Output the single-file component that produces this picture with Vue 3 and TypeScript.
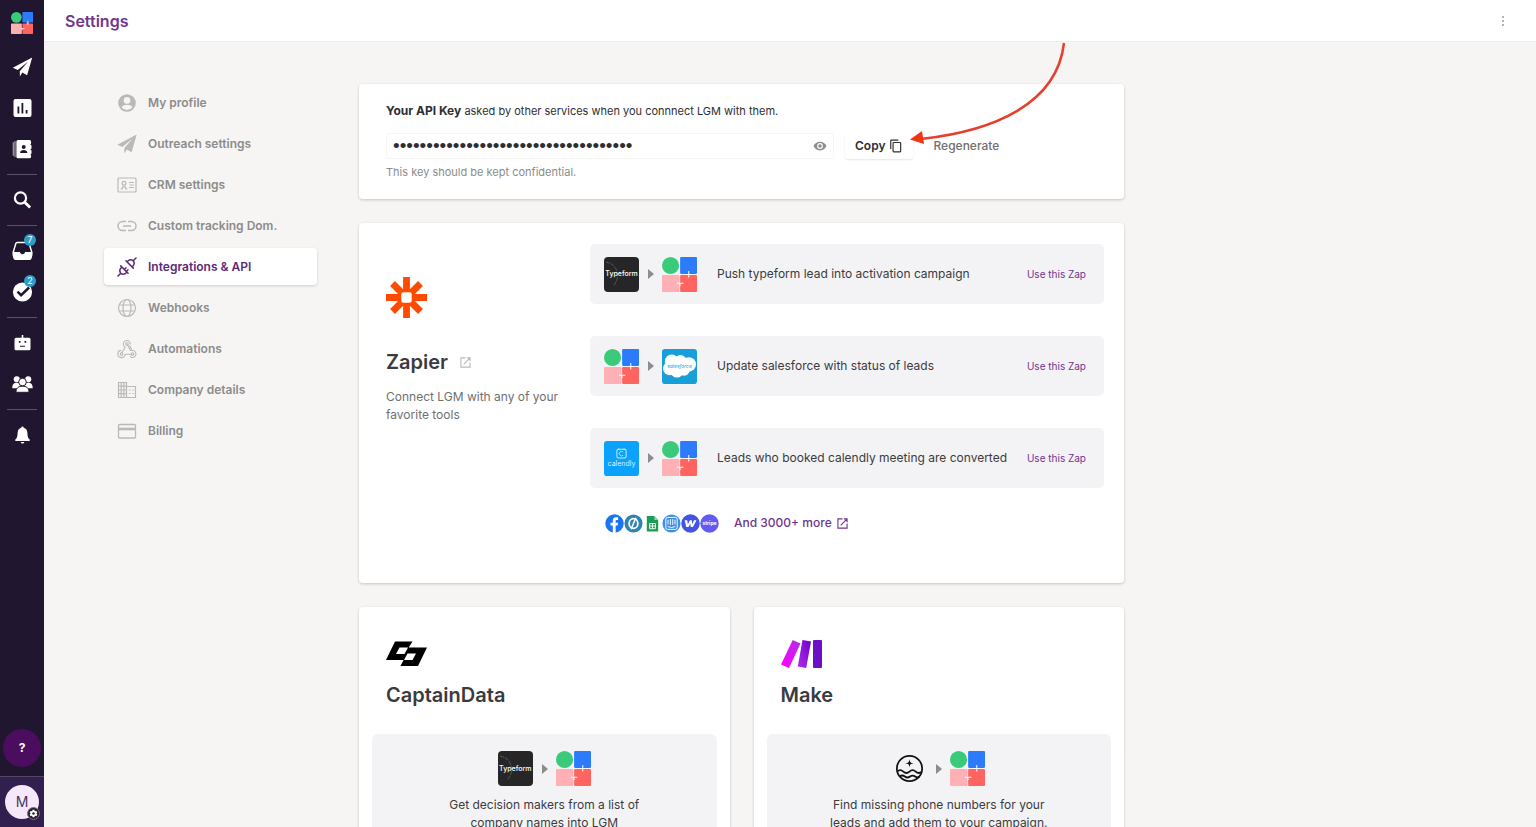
<script setup lang="ts">
import { ref } from 'vue'

interface RailItem { icon: string; label: string; badge?: number }
interface NavItem { icon: string; label: string }
interface Zap { from: string; to: string; text: string }
interface Partner { name: string; logo: string; from: string; lines: string[] }

const rail: RailItem[][] = [
  [
    { icon: 'plane', label: 'Campaigns' },
    { icon: 'chart', label: 'Reports' },
    { icon: 'contacts', label: 'Contacts' },
  ],
  [{ icon: 'search', label: 'Search' }],
  [
    { icon: 'inbox', label: 'Inbox', badge: 7 },
    { icon: 'check', label: 'Tasks', badge: 2 },
  ],
  [
    { icon: 'robot', label: 'Bots' },
    { icon: 'group', label: 'Team' },
  ],
  [{ icon: 'bell', label: 'Notifications' }],
]

const nav: NavItem[] = [
  { icon: 'user', label: 'My profile' },
  { icon: 'plane', label: 'Outreach settings' },
  { icon: 'idcard', label: 'CRM settings' },
  { icon: 'link', label: 'Custom tracking Dom.' },
  { icon: 'plug', label: 'Integrations & API' },
  { icon: 'globe', label: 'Webhooks' },
  { icon: 'hook', label: 'Automations' },
  { icon: 'building', label: 'Company details' },
  { icon: 'card', label: 'Billing' },
]
const active = ref('Integrations & API')

const zaps: Zap[] = [
  { from: 'typeform', to: 'lgm', text: 'Push typeform lead into activation campaign' },
  { from: 'lgm', to: 'salesforce', text: 'Update salesforce with status of leads' },
  { from: 'calendly', to: 'lgm', text: 'Leads who booked calendly meeting are converted' },
]

const apps = ['facebook', 'pipe', 'sheets', 'intercom', 'webflow', 'stripe']

// Wordmarks written over the logo tiles
const marks: Record<string, string> = {
  typeform: 'Typeform',
  salesforce: 'salesforce',
  calendly: 'calendly',
  stripe: 'stripe',
}

const partners: Partner[] = [
  { name: 'CaptainData', logo: 'captain', from: 'typeform', lines: ['Get decision makers from a list of', 'company names into LGM'] },
  { name: 'Make', logo: 'make', from: 'wave', lines: ['Find missing phone numbers for your', 'leads and add them to your campaign.'] },
]

const apiKey = ref('x'.repeat(36))
const shown = ref(false)
</script>

<template>
  <div class="app">
    <svg class="sprite" aria-hidden="true">
      <defs>
        <linearGradient id="mk1" x1="0" y1="1" x2="1" y2="0"><stop offset="0" stop-color="#f0f" /><stop offset="1" stop-color="#b02de9" /></linearGradient>
        <linearGradient id="mk2" x1="0" y1="1" x2="1" y2="0"><stop offset="0" stop-color="#b02de9" /><stop offset="1" stop-color="#6d00cc" /></linearGradient>
      </defs>
      <symbol id="lgm" viewBox="0 0 34 34">
        <circle cx="8.3" cy="8.3" r="8.3" fill="#3bc97a" />
        <rect x="17.6" width="16.4" height="16.4" rx="1" fill="#2b7bfb" />
        <rect y="17.6" width="16.8" height="16.4" rx="1" fill="#ffb0b4" />
        <rect x="17.6" y="17.6" width="16.4" height="16.4" rx="1" fill="#ff6460" />
        <path d="M26 13.5v6.5M23.8 17h4.4M14.4 25.6h6.4M17.4 25.6v2.600" stroke="#fff" stroke-width="1" fill="none" />
      </symbol>
      <symbol id="plane" viewBox="0 0 20 20">
        <path d="M19.7.5 14.6 18.3 9.9 15.6 7.4 19.6 7.3 14.2 15.6 4.4 5.3 12.9.3 10.7z" fill="currentColor" />
      </symbol>
      <symbol id="chart" viewBox="0 0 20 20">
        <path fill-rule="evenodd" d="M3 1h14a2 2 0 0 1 2 2v14a2 2 0 0 1-2 2H3a2 2 0 0 1-2-2V3a2 2 0 0 1 2-2zM5 8.5v7h1.800v-7zM9 5v10.500h1.800V5zM13.200 12v3.500H15V12z" fill="currentColor" />
      </symbol>
      <symbol id="contacts" viewBox="0 0 20 20">
        <path d="M2.500 2v16M.8 3.200v13.600" stroke="currentColor" stroke-width="1.200" opacity=".6" />
        <path fill-rule="evenodd" d="M5.500 1H17a1.600 1.600 0 0 1 1.600 1.600V4.500L17.800 5.500l1.200 1v3l-1.200 1 1.200 1v3l-1 1 .6 1v1.400A1.600 1.600 0 0 1 17 19.300H5.500A1.600 1.600 0 0 1 3.900 17.700V2.600A1.600 1.600 0 0 1 5.500 1zM11.200 6.100a2 2 0 1 0 0 4 2 2 0 0 0 0-4zM7.600 14h7.200c0-2-1.600-2.900-3.600-2.900S7.600 12 7.600 14z" fill="currentColor" />
      </symbol>
      <symbol id="search" viewBox="0 0 20 20">
        <circle cx="8" cy="8" r="5.600" fill="none" stroke="currentColor" stroke-width="2.200" />
        <path d="m12.200 12.200 5.400 5.400" stroke="currentColor" stroke-width="2.800" />
      </symbol>
      <symbol id="inbox" viewBox="0 0 22 20">
        <path d="M1.200 11.500 4 2.200Q4.300 1 5.500 1h11q1.200 0 1.500 1.200l2.800 9.300" fill="none" stroke="currentColor" stroke-width="1.500" />
        <path d="M.5 11h7.800c.4 1.400 1.200 2.300 2.700 2.300s2.300-.9 2.700-2.300h7.800v3l-.9 3.600q-.4 1.900-2.200 1.900H3.600q-1.800 0-2.200-1.900L.5 14z" fill="currentColor" />
      </symbol>
      <symbol id="check" viewBox="0 0 20 20">
        <circle cx="10" cy="10" r="9.600" fill="currentColor" />
        <path d="m5 9.600 3.600 3.600L16.600 5.500" fill="none" stroke="#21162f" stroke-width="2.500" />
      </symbol>
      <symbol id="robot" viewBox="0 0 20 20">
        <path fill-rule="evenodd" d="M9.200 2h1.600v2.800H16.500A1.500 1.500 0 0 1 18 6.300v9.400a1.500 1.500 0 0 1-1.500 1.500h-13A1.500 1.500 0 0 1 2 15.700V6.300a1.500 1.500 0 0 1 1.500-1.500h5.700zM6.300 8v1.700H8V8zM12 8v1.700h1.700V8zM7.500 12.800v1h5v-1z" fill="currentColor" />
      </symbol>
      <symbol id="group" viewBox="0 0 22 20">
        <g fill="currentColor">
          <circle cx="5" cy="5" r="3.200" /><circle cx="17" cy="5" r="3.200" />
          <path d="M.3 14.500c0-4.200 1.500-5.700 4.700-5.700s4 1 4 3l-3.200 2.700zM21.700 14.500c0-4.200-1.500-5.700-4.700-5.700s-4 1-4 3l3.200 2.700z" />
          <g stroke="#21162f" stroke-width="1"><circle cx="11" cy="8" r="4" /><path d="M4.200 18.700c0-4.500 2.500-6.400 6.800-6.400s6.800 1.900 6.800 6.400z" /></g>
        </g>
      </symbol>
      <symbol id="bell" viewBox="0 0 20 20">
        <path d="M10 1.500a1.200 1.200 0 0 1 1.200 1.200c2.400.6 3.600 2.600 3.700 5.300.1 3.400.5 5.200 2.300 6.600V16H2.800v-1.400C4.600 13.200 5 11.400 5.100 8c.1-2.700 1.300-4.700 3.700-5.300A1.200 1.200 0 0 1 10 1.500zM8.200 17h3.600a1.800 1.500 0 0 1-3.600 0z" fill="currentColor" />
      </symbol>
      <symbol id="gear" viewBox="0 0 24 24">
        <path fill-rule="evenodd" d="M9.500 2h5l.6 3 1.700 1 2.900-1 2.500 4.300-2.300 2v1.400l2.300 2-2.500 4.300-2.900-1-1.700 1-.6 3h-5l-.6-3-1.700-1-2.900 1-2.500-4.300 2.300-2v-1.400l-2.300-2L4.300 5l2.900 1 1.700-1zM12 8.500a3.500 3.500 0 1 0 0 7 3.500 3.500 0 0 0 0-7z" fill="currentColor" />
      </symbol>
      <symbol id="user" viewBox="0 0 20 20">
        <circle cx="10" cy="10" r="8.800" fill="currentColor" />
        <circle cx="10" cy="7.400" r="3.300" fill="#f6f5f4" />
        <path d="M4.500 14.200c1.200-1.700 3.300-2.400 5.500-2.400s4.300.7 5.500 2.400A7 7 0 0 1 10 17a7 7 0 0 1-5.500-2.800z" fill="#f6f5f4" />
      </symbol>
      <symbol id="idcard" viewBox="0 0 20 20">
        <g fill="none" stroke="currentColor" stroke-width="1.200">
          <rect x="1" y="3" width="18" height="14" rx="1" /><circle cx="7" cy="8.300" r="1.900" />
          <path d="M3.600 14h1.600l.4-2.200h2.800L8.800 14h1.600M12 7.500h4.800M12.600 10h4.200M12 12.500h4.800" />
        </g>
      </symbol>
      <symbol id="link" viewBox="0 0 20 20">
        <path d="M9 5.500H5.500a4.500 4.500 0 0 0 0 9H9M11 5.500h3.500a4.500 4.500 0 0 1 0 9H11M6 10h8" fill="none" stroke="currentColor" stroke-width="1.500" />
      </symbol>
      <symbol id="plug" viewBox="0 0 20 20">
        <g fill="none" stroke="currentColor" stroke-width="1.500" stroke-linecap="round" stroke-linejoin="round">
          <path d="m1 19 2.800-2.800M16.200 3.800 19 1M3.700 8.900l7.400 7.400M4.800 10c-2 2-2.600 4.400-1 6.200 1.800 1.600 4.200 1 6.200-1M7.300 12.500l1.700-1.700" />
          <path d="m8.900 3.700 7.400 7.400M10 4.800c2-2 4.400-2.600 6.200-1 1.600 1.800 1 4.200-1 6.200M9.300 14.500l1.700-1.700" />
        </g>
      </symbol>
      <symbol id="globe" viewBox="0 0 20 20">
        <g fill="none" stroke="currentColor" stroke-width="1.200"><circle cx="10" cy="10" r="8.500" /><ellipse cx="10" cy="10" rx="4" ry="8.500" /><path d="M2.300 7h15.400M2.300 13h15.400" /></g>
      </symbol>
      <symbol id="hook" viewBox="0 0 20 20">
        <g fill="none" stroke="currentColor" stroke-width="1.100" stroke-linejoin="round">
          <circle cx="10" cy="5" r="1.300" /><circle cx="4.500" cy="15" r="1.300" /><circle cx="15.500" cy="15" r="1.300" />
          <path d="M7.300 7.600A3.600 3.600 0 1 1 13.500 5.500M7.300 7.600 8.200 8.300 4.700 14M10.200 5.200l3.300 6.300c2.600-.9 5.500.7 5.500 3.500a3.500 3.500 0 0 1-6 2.400M4.300 11.400A3.600 3.600 0 1 0 8 15.200H15.200M12.500 6.500l2.200 4" />
        </g>
      </symbol>
      <symbol id="building" viewBox="0 0 20 20">
        <path d="M1.500 2.500h8v15h-8zM9.500 6.500h9v11h-9M1.500 6.200h8M1.500 10h8M1.500 13.700h8M4.200 2v15.500M6.900 2v15.500M12 10h1.500M12 13.500h1.500M15.300 10h1.500M15.300 13.500h1.500" fill="none" stroke="currentColor" stroke-width="1.200" />
      </symbol>
      <symbol id="card" viewBox="0 0 20 20">
        <rect x="1.500" y="3.500" width="17" height="13.500" rx="1" fill="none" stroke="currentColor" stroke-width="1.300" />
        <path d="M1.500 8h17" stroke="currentColor" stroke-width="2.600" />
      </symbol>
      <symbol id="eye" viewBox="0 0 24 24">
        <path fill-rule="evenodd" d="M12 4.500C7 4.500 2.700 7.600 1 12c1.700 4.400 6 7.500 11 7.500s9.300-3.100 11-7.500c-1.700-4.400-6-7.500-11-7.500zM12 17a5 5 0 1 1 0-10 5 5 0 0 1 0 10zm0-8a3 3 0 1 0 0 6 3 3 0 0 0 0-6z" fill="currentColor" />
      </symbol>
      <symbol id="copy" viewBox="0 0 24 24">
        <path fill-rule="evenodd" d="M16 1H4a2 2 0 0 0-2 2v14h2V3h12zm3 4H8a2 2 0 0 0-2 2v14a2 2 0 0 0 2 2h11a2 2 0 0 0 2-2V7a2 2 0 0 0-2-2zm0 16H8V7h11z" fill="currentColor" />
      </symbol>
      <symbol id="open" viewBox="0 0 12 12">
        <path d="M6 1H1v10h10V6M7.500 1H11v3.500M11 1 4 8" fill="none" stroke="currentColor" stroke-width="1.200" />
      </symbol>
      <symbol id="zapier" viewBox="0 0 41 41">
        <path d="M20.500 0v41M0 20.500h41M6.500 6.500l28 28M34.500 6.500l-28 28" stroke="#ff4a00" stroke-width="6.800" />
        <rect x="12" y="12" width="17" height="17" fill="#ff4a00" /><rect x="15.300" y="15.300" width="10.400" height="10.400" rx="2" fill="#fff" />
      </symbol>
      <symbol id="typeform" viewBox="0 0 34 34">
        <rect width="34" height="34" rx="4" fill="#262628" />
        <path d="M2 5c8 1 12 8 11 15-.5 3-2 6-4 8" fill="none" stroke="#777" stroke-width=".6" stroke-dasharray="4 1" />
      </symbol>
      <symbol id="salesforce" viewBox="0 0 34 34">
        <rect width="34" height="34" rx="3" fill="#189fd9" />
        <g fill="#fff"><circle cx="9.500" cy="12" r="6.700" /><circle cx="18" cy="11.500" r="5.700" /><circle cx="26" cy="15" r="7" /><circle cx="7.500" cy="19" r="6.500" /><circle cx="14.500" cy="21.500" r="6.300" /><circle cx="21.500" cy="20.500" r="5.500" /></g>
      </symbol>
      <symbol id="calendly" viewBox="0 0 34 34">
        <rect width="34" height="34" rx="3" fill="#0aa2fb" />
        <rect x="12.500" y="8" width="9" height="8.500" rx="1.500" fill="none" stroke="#c5e9ff" stroke-width="1" /><path d="M18.500 10.600a2.200 2.200 0 1 0 0 3.300M14.500 7v2M19.500 7v2" fill="none" stroke="#c5e9ff" stroke-width=".8" />
      </symbol>
      <symbol id="wave" viewBox="0 0 34 34">
        <g fill="none" stroke="#111" stroke-width="1.700"><circle cx="17" cy="17" r="12.300" /><path d="M5 20c2-1.800 4-1.800 6 0s4 1.800 6 0 4-1.800 6 0 4 1.800 6 0M7.500 24.800c1.800-1.600 3.300-1.300 5 0 1.700 1.300 3.300 1.300 5 0s3.300-1.300 5 0 2.700 1.200 4 .2" /></g>
        <path d="M17 8c.5 3 1 3.500 4 4-3 .5-3.500 1-4 4-.5-3-1-3.500-4-4 3-.5 3.500-1 4-4z" fill="#111" />
      </symbol>
      <symbol id="facebook" viewBox="0 0 20 20"><circle cx="10" cy="10" r="9.700" fill="#1b74f2" /><path d="M13.800 6.200H12.300q-1.100 0-1.100 1.200v1.800h2.500l-.4 2.800h-2.100v8H8.200v-8H5.800V9.200h2.400V7q0-3.600 3.600-3.600h2z" fill="#fff" /></symbol>
      <symbol id="pipe" viewBox="0 0 20 20"><circle cx="10" cy="10" r="9.500" fill="#2d83b5" /><ellipse cx="10" cy="10" rx="4.600" ry="5.200" fill="none" stroke="#fff" stroke-width="1.900" /><path d="m7.500 16 5-12" stroke="#fff" stroke-width="1.600" /></symbol>
      <symbol id="sheets" viewBox="0 0 20 20"><path d="M4 2h8l4 4.200v12.300H4z" fill="#1d9c56" /><path d="M12 2v4.200h4z" fill="#8ed1b1" /><path d="M7 10h6v5.500H7zM7 12.700h6M10 10v5.500" fill="none" stroke="#fff" stroke-width="1" /></symbol>
      <symbol id="intercom" viewBox="0 0 20 20"><circle cx="10" cy="10" r="9.500" fill="#3d8fe8" /><rect x="4" y="3.600" width="12" height="12.600" rx="1.800" fill="#3d8fe8" stroke="#fff" stroke-width="1" /><path d="M6.300 6v5M8.800 5.500v6M11.300 5.500v6M13.700 6v5M6 13.200q4 2 8 0" fill="none" stroke="#fff" stroke-width="1" /></symbol>
      <symbol id="webflow" viewBox="0 0 20 20"><circle cx="10" cy="10" r="9.700" fill="#4353e8" /><path d="M3.900 6.500h2.600l.8 4.200 2-4.200h2l.5 4.200 1.900-4.200h2.600l-3.700 7.200h-2.300l-.6-3.500-1.800 3.500H5.500z" fill="#fff" /></symbol>
      <symbol id="stripe" viewBox="0 0 20 20"><circle cx="10" cy="10" r="9.700" fill="#635bef" /></symbol>
      <symbol id="captain" viewBox="0 0 41 28">
        <path fill-rule="evenodd" d="M9 1.500h17.500L22.700 7.500H41L32 26H14.500l3-6H0zM13.500 7.500 10 14h8.500L22 7.500zM21.500 13.500 18 20h8.500L30 13.500z" fill="#000" />
      </symbol>
      <symbol id="make" viewBox="0 0 41 28">
        <path d="M11.700 0 19.500 3.500 8 28 0 24.500z" fill="url(#mk1)" /><path d="M21.500 0 30 1.400 25.200 28 16.800 26.400z" fill="url(#mk2)" /><rect x="32" width="9" height="28" rx="1" fill="#6d0fc4" />
      </symbol>
    </svg>

    <aside class="rail">
      <a class="brand" href="#" aria-label="Home"><svg><use href="#lgm" /></svg></a>
      <nav v-for="(group, g) in rail" :key="g" class="rail-group">
        <a v-for="item in group" :key="item.icon" class="rail-item" href="#" :aria-label="item.label">
          <svg><use :href="'#' + item.icon" /></svg>
          <span v-if="item.badge" class="badge">{{ item.badge }}</span>
        </a>
      </nav>
      <button class="help" type="button">?</button>
      <div class="account">
        <button class="avatar" type="button">M<span class="cog"><svg><use href="#gear" /></svg></span></button>
      </div>
    </aside>

    <div class="page">
      <header class="top">
        <h1>Settings</h1>
        <button class="more" type="button" aria-label="More"><i /><i /><i /></button>
      </header>

      <div class="body">
        <nav class="nav">
          <a v-for="item in nav" :key="item.label" href="#" :class="{ on: item.label === active }" @click.prevent="active = item.label">
            <svg><use :href="'#' + item.icon" /></svg>{{ item.label }}
          </a>
        </nav>

        <main class="main">
          <section class="card api">
            <label class="api-title" for="key"><b>Your API Key</b> asked by other services when you connnect LGM with them.</label>
            <div class="key-row">
              <div class="key-box">
                <input id="key" v-model="apiKey" :type="shown ? 'text' : 'password'" readonly />
                <button type="button" aria-label="Show key" @click="shown = !shown"><svg><use href="#eye" /></svg></button>
              </div>
              <button class="copy" type="button">Copy <svg><use href="#copy" /></svg></button>
              <button class="regen" type="button">Regenerate</button>
            </div>
            <p class="hint">This key should be kept confidential.</p>
          </section>

          <section class="card zapier">
            <div class="about">
              <svg class="zap-logo"><use href="#zapier" /></svg>
              <h2>Zapier <a href="#" aria-label="Open Zapier"><svg><use href="#open" /></svg></a></h2>
              <p>Connect LGM with any of your favorite tools</p>
            </div>
            <div class="zaps">
              <div v-for="zap in zaps" :key="zap.text" class="zap">
                <div class="pair">
                  <span class="logo"><svg><use :href="'#' + zap.from" /></svg><em v-if="marks[zap.from]" :class="zap.from">{{ marks[zap.from] }}</em></span>
                  <i />
                  <span class="logo"><svg><use :href="'#' + zap.to" /></svg><em v-if="marks[zap.to]" :class="zap.to">{{ marks[zap.to] }}</em></span>
                </div>
                <p>{{ zap.text }}</p>
                <a href="#">Use this Zap</a>
              </div>
              <div class="apps">
                <span v-for="app in apps" :key="app" class="logo"><svg><use :href="'#' + app" /></svg><em v-if="marks[app]" :class="app">{{ marks[app] }}</em></span>
                <a href="#">And 3000+ more <svg><use href="#open" /></svg></a>
              </div>
            </div>
          </section>

          <div class="partners">
            <section v-for="p in partners" :key="p.name" class="card partner">
              <svg class="partner-logo"><use :href="'#' + p.logo" /></svg>
              <h2>{{ p.name }}</h2>
              <div class="tile">
                <div class="pair">
                  <span class="logo"><svg><use :href="'#' + p.from" /></svg><em v-if="marks[p.from]" :class="p.from">{{ marks[p.from] }}</em></span>
                  <i />
                  <span class="logo"><svg><use href="#lgm" /></svg></span>
                </div>
                <p><template v-for="line in p.lines" :key="line">{{ line }}<br /></template></p>
              </div>
            </section>
          </div>

          <svg class="arrow" viewBox="0 0 160 110" aria-hidden="true">
            <path d="M155 1C148 62 85 89 12 97" fill="none" stroke="#e5402d" stroke-width="2.500" />
            <path d="M1 97.500 13 89l2 13z" fill="#f03311" />
          </svg>
        </main>
      </div>
    </div>
  </div>
</template>

<style>
body { margin: 0; }
</style>

<style scoped>
.app { display: flex; height: 100vh; overflow: hidden; font: 12px/18px Inter, "Noto Sans", sans-serif; color: #3b3b3e; background: #f6f5f4; }
.app * { box-sizing: border-box; }
svg { display: block; flex: none; }
a { color: inherit; text-decoration: none; }
button { border: 0; padding: 0; background: none; font: inherit; color: inherit; cursor: pointer; }
h1, h2, p { margin: 0; }
.sprite { position: absolute; width: 0; height: 0; }

.rail { display: flex; flex-direction: column; flex: none; width: 44px; background: #21162f; color: #fff; }
.brand { display: grid; place-items: center; height: 46px; }
.brand svg { width: 22px; height: 22px; }
.rail-group { margin: 0 7px; }
.rail-group + .rail-group { margin-top: 5px; padding-top: 4px; border-top: 1px solid #5b5266; }
.rail-item { position: relative; display: grid; place-items: center; height: 41px; }
.rail-item svg { width: 21px; height: 20px; }
.badge { position: absolute; top: 4px; right: 1px; width: 12px; height: 12px; border-radius: 50%; background: #2d9cc6; font-size: 9px; line-height: 12px; text-align: center; }
.help { width: 38px; height: 38px; margin: auto auto 9px; border-radius: 50%; background: #4b0d5e; font-weight: 700; }
.account { display: grid; place-items: center; height: 51px; background: #31204f; border-top: 1px solid #514568; }
.avatar { position: relative; width: 34px; height: 34px; border-radius: 50%; background: #f5e8fa; color: #4c3559; font-size: 14px; }
.cog { position: absolute; right: -1px; bottom: -1px; display: grid; place-items: center; width: 13px; height: 13px; border-radius: 50%; background: #262232; color: #fff; border: 1px solid #77717f; }
.cog svg { width: 9px; height: 9px; }

.page { flex: 1; min-width: 0; display: flex; flex-direction: column; }
.top { display: flex; flex: none; align-items: center; justify-content: space-between; height: 42px; padding: 0 30px 0 21px; background: #fff; border-bottom: 1px solid #ececec; }
.top h1 { color: #6f3590; font-size: 16px; line-height: 22px; font-weight: 600; }
.more { display: grid; gap: 2px; width: 6px; justify-items: center; }
.more i { width: 2px; height: 2px; border-radius: 50%; background: #999; }

.body { flex: 1; min-height: 0; overflow-y: auto; scrollbar-width: none; display: grid; grid-template-columns: 213px minmax(0, 765px); gap: 42px; align-items: start; padding: 42px 60px 24px; }
.nav { display: grid; gap: 4px; }
.nav a { display: flex; align-items: center; gap: 11px; height: 37px; padding: 0 13px; border-radius: 4px; color: #8c8c8c; font-weight: 600; }
.nav svg { width: 20px; height: 20px; color: #b9b9b9; }
.nav .on, .nav .on svg { color: #5d2a79; }
.nav .on { background: #fff; box-shadow: 0 1px 3px rgba(0, 0, 0, .16); }

.main { position: relative; display: grid; gap: 24px; }
.card { background: #fff; border-radius: 4px; box-shadow: 0 1px 3px rgba(0, 0, 0, .2); }
.api { padding: 18px 27px; }
.api-title { display: block; font-size: 11px; color: #2e2e30; }
.api-title b { font-size: 12px; }
.key-row { display: flex; align-items: center; margin: 13px 0 4px; }
.key-box { display: flex; flex: 0 1 448px; align-items: center; height: 26px; padding: 0 6px; border: 1px solid #f5f5f5; border-radius: 3px; }
.key-box input { flex: 1; min-width: 0; height: 24px; padding: 0; border: 0; outline: 0; background: none; color: #2e2e30; font: 19px "Liberation Sans", sans-serif; }
.key-box svg { width: 14px; height: 14px; color: #8c8c8c; }
.copy { display: flex; align-items: center; gap: 4px; height: 26px; margin-left: 11px; padding: 0 10px; border-radius: 3px; box-shadow: 0 1px 2px rgba(0, 0, 0, .1); color: #2e2e30; font-weight: 600; }
.copy svg { width: 14px; height: 14px; }
.regen { margin-left: 20px; color: #707070; font-weight: 500; }
.hint { font-size: 11px; color: #8c8c8c; }

.zapier { display: grid; grid-template-columns: 204px minmax(0, 1fr); padding: 21px 20px 50px 27px; }
.about { padding-top: 33px; }
.about p { width: 180px; margin-top: 13px; color: #707070; }
.zap-logo { width: 41px; height: 41px; }
h2 { font-size: 20px; line-height: 26px; font-weight: 600; }
.about h2 { display: flex; align-items: center; gap: 12px; margin-top: 31px; }
.about h2 svg { width: 11px; height: 11px; color: #b9b9b9; }
.zap { display: flex; align-items: center; height: 60px; margin-bottom: 32px; padding: 0 18px 0 14px; border-radius: 5px; background: #f3f3f5; }
.zap > p { margin-left: 20px; }
.zap > a { margin-left: auto; color: #6f3590; font-size: 10px; }
.logo { position: relative; display: block; flex: none; overflow: hidden; }
.logo em { position: absolute; inset: 0; display: flex; align-items: center; justify-content: center; font-style: normal; line-height: 10px; }
.logo .typeform { color: #fff; font-size: 7px; font-weight: 500; }
.logo .salesforce { color: #189fd9; font-size: 5px; font-style: italic; }
.logo .calendly { padding-top: 11px; color: #d8f0ff; font-size: 7px; }
.logo .stripe { color: #fff; font-size: 5px; font-weight: 700; }
.pair { display: flex; align-items: center; justify-content: center; }
.pair svg { width: 35px; height: 35px; }
.pair i { margin: 0 8px 0 9px; border: solid transparent; border-width: 5px 0 5px 6px; border-left-color: #8c8c8c; }
.apps { display: flex; align-items: center; height: 20px; margin-top: -7px; padding-left: 15px; }
.apps .logo svg { width: 19px; height: 19px; }
.apps a { display: flex; align-items: center; gap: 5px; margin-left: 15px; color: #6f3590; font-weight: 500; }
.apps a svg { width: 11px; height: 11px; }

.partners { display: grid; grid-template-columns: 1fr 1fr; gap: 24px; }
.partner { padding: 33px 13px 14px; }
.partner-logo { width: 41px; height: 28px; margin-left: 14px; }
.partner h2 { margin: 14px 0 26px 14px; }
.tile { padding: 17px 20px 24px; border-radius: 6px; background: #f3f3f5; text-align: center; }
.tile p { margin-top: 10px; }

.arrow { position: absolute; top: -42px; left: 550px; width: 160px; height: 110px; pointer-events: none; }
</style>
